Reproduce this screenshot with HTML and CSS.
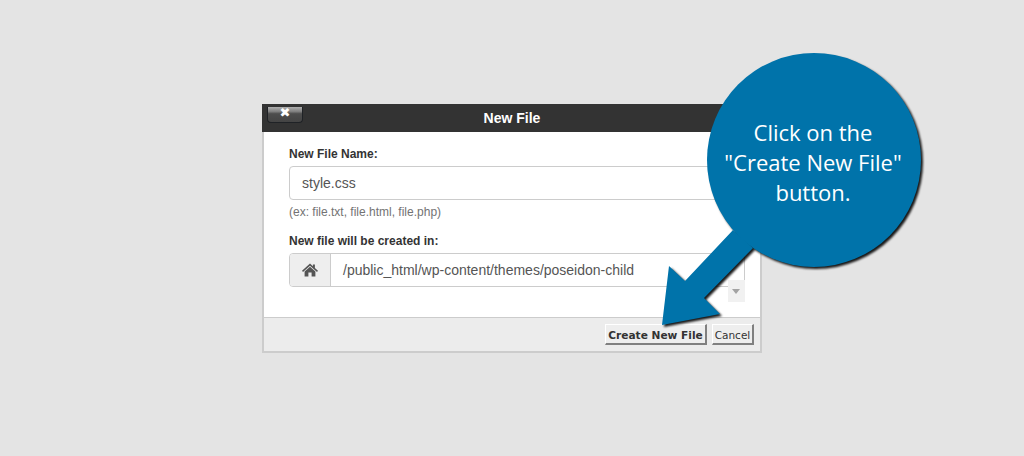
FILE: index.html
```html
<!DOCTYPE html>
<html lang="en">
<head>
<meta charset="utf-8">
<title>New File</title>
<link rel="stylesheet" href="styles.css">
</head>
<body>
<div class="dialog">
  <header class="titlebar">
    <button class="close" type="button">&#10006;</button>
    <h1 class="title">New File</h1>
  </header>
  <main class="content">
    <label class="label">New File Name:</label>
    <div class="field">style.css</div>
    <p class="hint">(ex: file.txt, file.html, file.php)</p>
    <label class="label label-path">New file will be created in:</label>
    <div class="group">
      <span class="addon">
        <svg class="home" viewBox="0 0 16 14" width="16" height="14"><path fill="#555" d="M8 0.6 L10.9 3.2 V1.5 H12.9 V5 L16 7.8 L15 8.9 L8 2.8 L1 8.9 L0 7.8 Z M2.6 8.4 L8 3.8 L13.4 8.4 V13.6 H9.6 V9.6 H6.4 V13.6 H2.6 Z"/></svg>
      </span>
      <span class="path">/public_html/wp-content/themes/poseidon-child</span>
    </div>
    <div class="scroller"><span class="scroll-arrow"></span></div>
  </main>
  <footer class="actions">
    <button class="btn btn-primary" type="button">Create New File</button>
    <button class="btn" type="button">Cancel</button>
  </footer>
</div>
<div class="callout">
  <svg class="callout-shape" viewBox="0 0 1024 456" width="1024" height="456">
    <g class="shape-shadow">
      <circle cx="814" cy="160" r="107" fill="#0073aa"/>
      <polygon fill="#0073aa" points="733,230 753,248 704,298 720,314 662,325 669,266 685,281"/>
    </g>
  </svg>
  <p class="callout-text">Click on the<br>"Create New File"<br>button.</p>
</div>
</body>
</html>
```
FILE: styles.css
```css
* { box-sizing: border-box; }
html, body { margin: 0; height: 456px; overflow: hidden; }
body {
  background: #e4e4e4;
  display: flex;
  align-items: center;
  justify-content: center;
  font-family: "Liberation Sans", Arial, sans-serif;
  color: #333;
}
.dialog {
  position: relative;
  width: 500px;
  height: 249px;
  display: flex;
  flex-direction: column;
  background: #fff;
  border: solid #ccc;
  border-width: 0 2px 2px;
}
.titlebar {
  position: relative;
  height: 28px;
  margin: 0 -2px;
  background: #333;
  flex: none;
}
.title {
  margin: 0;
  font-size: 14px;
  font-weight: bold;
  line-height: 28px;
  text-align: center;
  color: #fff;
}
.close {
  position: absolute;
  left: 5px;
  top: 3px;
  width: 36px;
  height: 16px;
  padding: 0 0 2px;
  border: 1px solid #1f2226;
  border-top: 0;
  border-radius: 0 0 4px 4px;
  background: linear-gradient(#b0b0b0 0, #808080 30%, #4d4d4d 45%, #444 100%);
  color: #fff;
  font: bold 13px/12px "DejaVu Sans", sans-serif;
}
.content {
  position: relative;
  flex: 1;
  padding: 14px 0 0 25px;
}
.label {
  display: block;
  font-size: 12px;
  font-weight: bold;
  line-height: 16px;
  color: #333;
}
.label-path { margin-top: 14px; }
.field {
  width: 456px;
  height: 34px;
  margin-top: 4px;
  padding: 0 12px;
  border: 1px solid #ccc;
  border-radius: 4px;
  font-size: 14px;
  line-height: 32px;
  color: #555;
}
.hint {
  margin: 5px 0 0;
  font-size: 12px;
  line-height: 14px;
  color: #737373;
}
.group {
  display: flex;
  width: 456px;
  height: 34px;
  margin-top: 4px;
  border: 1px solid #ccc;
  border-radius: 4px;
  font-size: 14px;
  color: #555;
}
.addon {
  display: flex;
  align-items: center;
  justify-content: center;
  width: 41px;
  flex: none;
  background: #eee;
  border-right: 1px solid #ccc;
  border-radius: 3px 0 0 3px;
}
.path {
  padding-left: 12px;
  line-height: 32px;
}
.scroller {
  position: absolute;
  left: 464px;
  top: 148px;
  width: 17px;
  height: 22px;
  background: #f1f1f1;
}
.scroll-arrow {
  position: absolute;
  left: 4px;
  top: 9px;
  border: 4px solid transparent;
  border-top: 5px solid #a3a3a3;
  border-bottom: 0;
}
.actions {
  flex: none;
  height: 34px;
  display: flex;
  justify-content: flex-end;
  align-items: flex-start;
  gap: 5px;
  padding: 6px 6px 0 0;
  background: #ececec;
  border-top: 1px solid #ccc;
}
.btn {
  height: 21px;
  width: 42px;
  padding: 2px 0 0;
  background: #eee;
  border: solid;
  border-color: #fff #808080 #808080 #fff;
  border-width: 1px 2px 2px 1px;
  border-radius: 0;
  font: 10.5px/16px "DejaVu Sans", sans-serif;
  white-space: nowrap;
  color: #333;
}
.btn-primary { width: 102px; font-weight: bold; font-size: 10.6px; }
.callout {
  position: absolute;
  inset: 0;
  pointer-events: none;
}
.callout-shape { display: block; }
.shape-shadow { filter: drop-shadow(2px 2px 1.2px rgba(0, 0, 0, 0.9)); }
.callout-text {
  position: absolute;
  left: 706px;
  top: 117px;
  width: 214px;
  margin: 0;
  font-family: "Open Sans", sans-serif;
  font-size: 22px;
  line-height: 30px;
  text-align: center;
  color: #fff;
}
```
